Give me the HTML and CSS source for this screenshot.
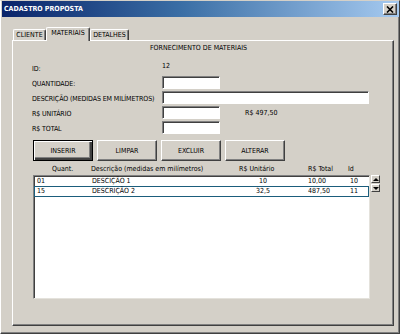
FILE: index.html
```html
<!DOCTYPE html>
<html lang="pt-BR">
<head>
    <meta charset="UTF-8">
    <meta name="viewport" content="width=device-width, initial-scale=1.0">
    <title>Cadastro Proposta</title>
    <link rel="stylesheet" href="styles.css">
</head>
<body>
    <div class="window">
        <div class="title-bar">
            <span class="title">CADASTRO PROPOSTA</span>
            <span class="close-btn">
                <svg width="8" height="7" viewBox="0 0 8 7">
                    <path d="M1 0.5 L7 6.5 M7 0.5 L1 6.5" stroke="#000" stroke-width="1.6"/>
                </svg>
            </span>
        </div>

        <div class="tabs">
            <div class="tab">CLIENTE</div>
            <div class="tab active">MATERIAIS</div>
            <div class="tab">DETALHES</div>
        </div>

        <div class="tab-page">
            <div class="heading">FORNECIMENTO DE MATERIAIS</div>

            <div class="form-grid">
                <label class="lbl">ID:</label>
                <span class="id-value">12</span>

                <label class="lbl">QUANTIDADE:</label>
                <div class="field"><input type="text" class="box short"></div>

                <label class="lbl">DESCRIÇÃO (MEDIDAS EM MILÍMETROS)</label>
                <div class="field"><input type="text" class="box long"></div>

                <label class="lbl">R$ UNITÁRIO</label>
                <div class="field">
                    <input type="text" class="box short">
                    <span class="calc">R$ 497,50</span>
                </div>

                <label class="lbl">R$ TOTAL</label>
                <div class="field"><input type="text" class="box short"></div>
            </div>

            <div class="buttons">
                <button class="btn default">INSERIR</button>
                <button class="btn">LIMPAR</button>
                <button class="btn">EXCLUIR</button>
                <button class="btn">ALTERAR</button>
            </div>

            <div class="list-header">
                <span class="h-quant">Quant.</span>
                <span class="h-desc">Descrição (medidas em milímetros)</span>
                <span class="h-unit">R$ Unitário</span>
                <span class="h-total">R$ Total</span>
                <span class="h-id">Id</span>
            </div>

            <div class="list-wrap">
                <div class="list-box">
                    <div class="row">
                        <span>01</span>
                        <span>DESCIÇÃO 1</span>
                        <span class="c-unit">10</span>
                        <span class="c-total">10,00</span>
                        <span>10</span>
                    </div>
                    <div class="row selected">
                        <span>15</span>
                        <span>DESCRIÇÃO 2</span>
                        <span class="c-unit">32,5</span>
                        <span class="c-total">487,50</span>
                        <span>11</span>
                    </div>
                </div>
                <div class="spin">
                    <span class="spin-btn"><i class="arrow up"></i></span>
                    <span class="spin-btn"><i class="arrow down"></i></span>
                </div>
            </div>
        </div>
    </div>
</body>
</html>
```

FILE: styles.css
```css
* {
    margin: 0;
    padding: 0;
    box-sizing: border-box;
    font-family: 'DejaVu Sans Condensed', 'DejaVu Sans', sans-serif;
    font-stretch: condensed;
}

body {
    width: 400px;
    height: 334px;
    background: #d4d0c8;
    overflow: hidden;
    font-size: 7px;
    color: #000;
}

.window {
    width: 400px;
    height: 334px;
    border-top: 1px solid #d4d0c8;
    border-left: 1px solid #fff;
    border-right: 1px solid #404040;
    border-bottom: 1px solid #404040;
    box-shadow: inset -1px -1px 0 #808080;
    padding-left: 1px;
}

.title-bar {
    height: 16px;
    display: flex;
    align-items: center;
    justify-content: space-between;
    padding: 0 2px 0 2px;
    background: linear-gradient(to right, #0a246a 0%, #3a6ea5 45%, #a6caf0 100%);
}

.title {
    color: #fff;
    font-weight: bold;
    font-size: 7px;
}

.close-btn {
    width: 14px;
    height: 12px;
    background: #d4d0c8;
    border-top: 1px solid #fff;
    border-left: 1px solid #fff;
    border-right: 1px solid #404040;
    border-bottom: 1px solid #404040;
    box-shadow: inset -1px -1px 0 #808080;
    display: flex;
    align-items: center;
    justify-content: center;
}

.tabs {
    display: flex;
    align-items: flex-end;
    height: 14px;
    margin-top: 10px;
    margin-bottom: -1px;
    padding-left: 11px;
    position: relative;
    z-index: 2;
}

.tab {
    height: 11px;
    margin-bottom: 1px;
    background: #d4d0c8;
    border-top: 1px solid #fff;
    border-left: 1px solid #fff;
    border-right: 1px solid #404040;
    box-shadow: inset -1px 0 0 #808080;
    border-radius: 2px 2px 0 0;
    display: flex;
    align-items: center;
    justify-content: center;
    line-height: 9px;
}

.tab:nth-child(1) { width: 33px; }
.tab:nth-child(3) { width: 39px; }

.tab.active {
    width: 44px;
    height: 14px;
    margin-bottom: 0;
    padding-bottom: 2px;
}

.tab-page {
    width: 382px;
    height: 286px;
    margin-left: 10px;
    border-top: 1px solid #fff;
    border-left: 1px solid #fff;
    border-right: 1px solid #404040;
    border-bottom: 1px solid #404040;
    box-shadow: inset -1px -1px 0 #808080;
}

.heading {
    margin-top: 3px;
    padding-left: 137px;
    line-height: 9px;
}

.form-grid {
    display: grid;
    grid-template-columns: 130px 1fr;
    grid-template-rows: 12px 13px 13px 13px 13px;
    row-gap: 2px;
    margin-top: 9px;
    padding-left: 19px;
}

.lbl {
    align-self: end;
    line-height: 9px;
    letter-spacing: -0.1px;
}

.id-value {
    line-height: 9px;
}

.field {
    display: flex;
    align-items: center;
}

.box {
    height: 13px;
    background: #fff;
    border-top: 1px solid #808080;
    border-left: 1px solid #808080;
    border-right: 1px solid #fff;
    border-bottom: 1px solid #fff;
    box-shadow: inset 1px 1px 0 #404040;
    outline: none;
}

.box.short { width: 58px; }
.box.long { width: 207px; }

.calc {
    margin-left: 25px;
}

.buttons {
    display: flex;
    gap: 4px;
    margin-top: 6px;
    padding-left: 20px;
}

.btn {
    width: 60px;
    height: 21px;
    background: #d4d0c8;
    border-top: 1px solid #fff;
    border-left: 1px solid #fff;
    border-right: 1px solid #404040;
    border-bottom: 1px solid #404040;
    box-shadow: inset -1px -1px 0 #808080;
    font-size: 7px;
    color: #000;
}

.btn.default {
    border: 1px solid #000;
    box-shadow: inset 1px 1px 0 #fff, inset -2px -2px 0 #404040, inset -3px -3px 0 #808080;
}

.list-header {
    display: flex;
    margin-top: 4px;
    padding-left: 39px;
    line-height: 9px;
}

.h-quant { width: 39px; }
.h-desc { width: 148px; }
.h-unit { width: 69px; }
.h-total { width: 40px; }

.list-wrap {
    display: flex;
    margin-top: 1px;
    padding-left: 20px;
}

.list-box {
    width: 337px;
    height: 124px;
    background: #fff;
    border-top: 1px solid #808080;
    border-left: 1px solid #808080;
    border-right: 1px solid #e4e2dc;
    border-bottom: 1px solid #e4e2dc;
    box-shadow: inset 1px 1px 0 #404040;
    padding-top: 1px;
}

.row {
    display: grid;
    grid-template-columns: 55px 148px 46px 64px 1fr;
    height: 9px;
    line-height: 9px;
    padding-left: 3px;
}

.row.selected {
    height: 11px;
    line-height: 9px;
    border: 1px solid #1b5d7c;
    padding-left: 2px;
}

.c-unit { text-align: center; }
.c-total { padding-left: 22px; }

.spin {
    display: flex;
    flex-direction: column;
    gap: 1px;
    margin-left: 1px;
}

.spin-btn {
    width: 9px;
    height: 8px;
    background: #d4d0c8;
    border-top: 1px solid #fff;
    border-left: 1px solid #fff;
    border-right: 1px solid #404040;
    border-bottom: 1px solid #404040;
    display: flex;
    align-items: center;
    justify-content: center;
}

.arrow {
    width: 0;
    height: 0;
    border-left: 3px solid transparent;
    border-right: 3px solid transparent;
}

.arrow.up { border-bottom: 3px solid #000; }
.arrow.down { border-top: 3px solid #000; }
```
